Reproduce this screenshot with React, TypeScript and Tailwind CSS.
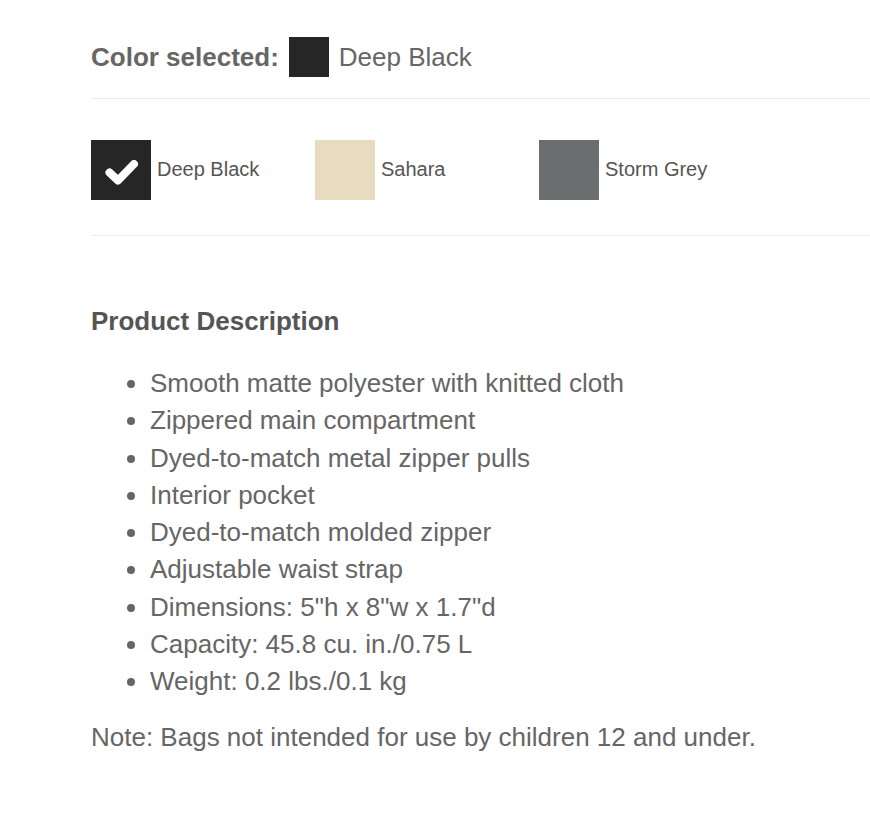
import React from 'react';

const swatches = [
  { name: 'Deep Black', color: 'bg-[#262626]', selected: true },
  { name: 'Sahara', color: 'bg-[#e7dcbf]', selected: false },
  { name: 'Storm Grey', color: 'bg-[#6a6e6f]', selected: false },
];

const features = [
  'Smooth matte polyester with knitted cloth',
  'Zippered main compartment',
  'Dyed-to-match metal zipper pulls',
  'Interior pocket',
  'Dyed-to-match molded zipper',
  'Adjustable waist strap',
  'Dimensions: 5"h x 8"w x 1.7"d',
  'Capacity: 45.8 cu. in./0.75 L',
  'Weight: 0.2 lbs./0.1 kg',
];

const App: React.FC = () => {
  return (
    <div className="min-h-screen bg-white pl-[91px] pt-[37px] font-['Liberation_Sans',Arial,sans-serif] text-[#666]">
      {/* selected colour */}
      <div className="flex h-10 items-center">
        <span className="text-[26px] font-bold text-[#666]">Color selected:</span>
        <span className="ml-[10px] h-10 w-10 bg-[#262626]" />
        <span className="ml-[10px] text-[26px]">Deep Black</span>
      </div>

      <div className="mt-[21px] border-t border-[#ebebeb]" />

      {/* swatch options */}
      <div className="mt-[41px] flex">
        {swatches.map((s) => (
          <div key={s.name} className="flex w-[224px] items-center">
            <div className={`h-[60px] w-[60px] shrink-0 ${s.color}`}>
              {s.selected && (
                <svg width="60" height="60" viewBox="0 0 60 60" className="blur-[0.5px]">
                  <path
                    d="M18.5 32.5 L27 40.5 L43 24"
                    fill="none"
                    stroke="#fff"
                    strokeWidth="8"
                    strokeLinecap="round"
                    strokeLinejoin="round"
                  />
                </svg>
              )}
            </div>
            <span className="-mt-[2px] ml-[6px] text-[20px] text-[#555]">{s.name}</span>
          </div>
        ))}
      </div>

      <div className="mt-[35px] border-t border-[#ebebeb]" />

      {/* description */}
      <h2 className="mt-[70px] text-[26px] font-bold leading-[30px] text-[#555]">Product Description</h2>

      <ul className="mt-[29px] list-disc pl-[59px] text-[26px] leading-[37.3px] text-[#666]">
        {features.map((f) => (
          <li key={f}>{f}</li>
        ))}
      </ul>

      <p className="mt-[18px] text-[26px] leading-[37px] text-[#666]">
        Note: Bags not intended for use by children 12 and under.
      </p>
    </div>
  );
};

export default App;
